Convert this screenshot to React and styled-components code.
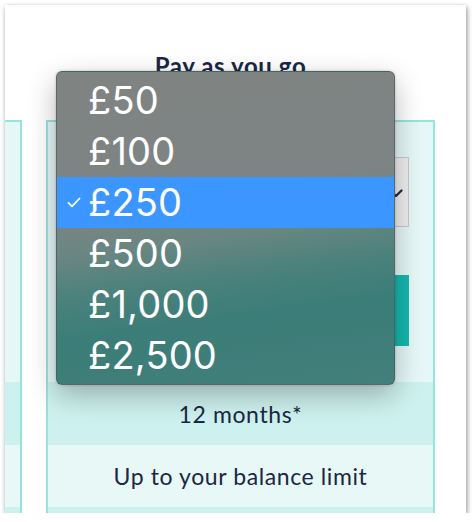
import React from "react";
import styled, { createGlobalStyle } from "styled-components";

const Global = createGlobalStyle`
  html, body { margin: 0; padding: 0; background: #ffffff; }
  body { font-family: "Lato", "Noto Sans", sans-serif; }
`;

const Stage = styled.div`
  padding: 5px 0 0 5px;
`;

const Window = styled.div`
  position: relative;
  width: 461px;
  height: 508px;
  background: #ffffff;
  overflow: hidden;
  box-shadow: 1px 2px 5px rgba(0, 0, 0, 0.45);
`;

const Title = styled.h2`
  margin: 0;
  padding-top: 47px;
  height: 115px;
  box-sizing: border-box;
  text-align: center;
  font-family: "Lato", sans-serif;
  font-weight: 700;
  font-size: 24px;
  line-height: 28px;
  letter-spacing: 0.6px;
  color: #1c2744;
  padding-right: 10px;
`;

const CardsRow = styled.div`
  display: flex;
  gap: 24px;
  align-items: flex-start;
`;

const Card = styled.div`
  flex: 0 0 auto;
  width: ${(p) => (p.$partial ? "17px" : "389px")};
  box-sizing: border-box;
  border: 2px solid #97e3de;
  border-left-width: ${(p) => (p.$partial ? "0" : "2px")};
  border-bottom: none;
  background: #e6f7f7;
  overflow: hidden;
`;

const CardHeader = styled.div`
  height: 260px;
  box-sizing: border-box;
  padding: 35px 24px 0 24px;
  display: flex;
  flex-direction: column;
  gap: 48px;
`;

const Select = styled.div`
  position: relative;
  height: 70px;
  box-sizing: border-box;
  background: #eeeeee;
  border: 1px solid #c9c9c9;
`;

const Chevron = styled.svg`
  position: absolute;
  right: 5px;
  top: 31px;
`;

const Button = styled.div`
  height: 71px;
  background: #14b8b0;
`;

const Row = styled.div`
  height: ${(p) => p.$h}px;
  background: ${(p) => (p.$dark ? "#cdf1ee" : "#e7f8f7")};
  display: flex;
  align-items: center;
  justify-content: center;
  font-family: "Lato", sans-serif;
  font-size: 23px;
  letter-spacing: 0.6px;
  color: #1c2744;
  white-space: nowrap;
`;

const Menu = styled.div`
  position: absolute;
  left: 51px;
  top: 66px;
  width: 339px;
  height: 314px;
  box-sizing: border-box;
  padding-top: 3px;
  border-radius: 6px;
  border: 1px solid rgba(70, 80, 78, 0.55);
  background: linear-gradient(
    172deg,
    #7f8483 0%,
    #7e8483 38%,
    #6a8682 52%,
    #4a817c 64%,
    #3b7d78 76%,
    #437f7b 100%
  );
  box-shadow: 0 10px 28px rgba(0, 0, 0, 0.28), 0 0 3px rgba(0, 0, 0, 0.2);
`;

const Option = styled.div`
  height: 51px;
  display: grid;
  grid-template-columns: 31px auto;
  align-items: center;
  background: ${(p) => (p.$selected ? "#3c96ff" : "transparent")};
  color: #ffffff;
  font-family: "Inter", "Noto Sans", sans-serif;
  font-size: 38px;
  line-height: 51px;
  letter-spacing: 0.2px;
`;

const CheckCell = styled.span`
  display: flex;
  justify-content: center;
  padding-left: 2px;
`;

const options = ["£50", "£100", "£250", "£500", "£1,000", "£2,500"];

export default function App() {
  return (
    <>
      <Global />
      <Stage>
        <Window>
          <Title>Pay as you go</Title>
          <CardsRow>
            <Card $partial>
              <CardHeader />
              <Row $dark $h={63} />
              <Row $h={62} />
              <Row $dark $h={62} />
            </Card>
            <Card>
              <CardHeader>
                <Select>
                  <Chevron width="14" height="9" viewBox="0 0 14 9">
                    <path
                      d="M1.5 1.5 L7 7 L12.5 1.5"
                      fill="none"
                      stroke="#1c2744"
                      strokeWidth="2.2"
                      strokeLinecap="round"
                      strokeLinejoin="round"
                    />
                  </Chevron>
                </Select>
                <Button />
              </CardHeader>
              <Row $dark $h={63}>12 months*</Row>
              <Row $h={62}>Up to your balance limit</Row>
              <Row $dark $h={62} />
            </Card>
          </CardsRow>
          <Menu>
            {options.map((o) => (
              <Option key={o} $selected={o === "£250"}>
                <CheckCell>
                  {o === "£250" && (
                    <svg width="14" height="11" viewBox="0 0 14 11">
                      <path
                        d="M1.5 5.8 L5 9.3 L12.5 1.5"
                        fill="none"
                        stroke="#ffffff"
                        strokeWidth="1.8"
                        strokeLinecap="round"
                        strokeLinejoin="round"
                      />
                    </svg>
                  )}
                </CheckCell>
                <span>{o}</span>
              </Option>
            ))}
          </Menu>
        </Window>
      </Stage>
    </>
  );
}
